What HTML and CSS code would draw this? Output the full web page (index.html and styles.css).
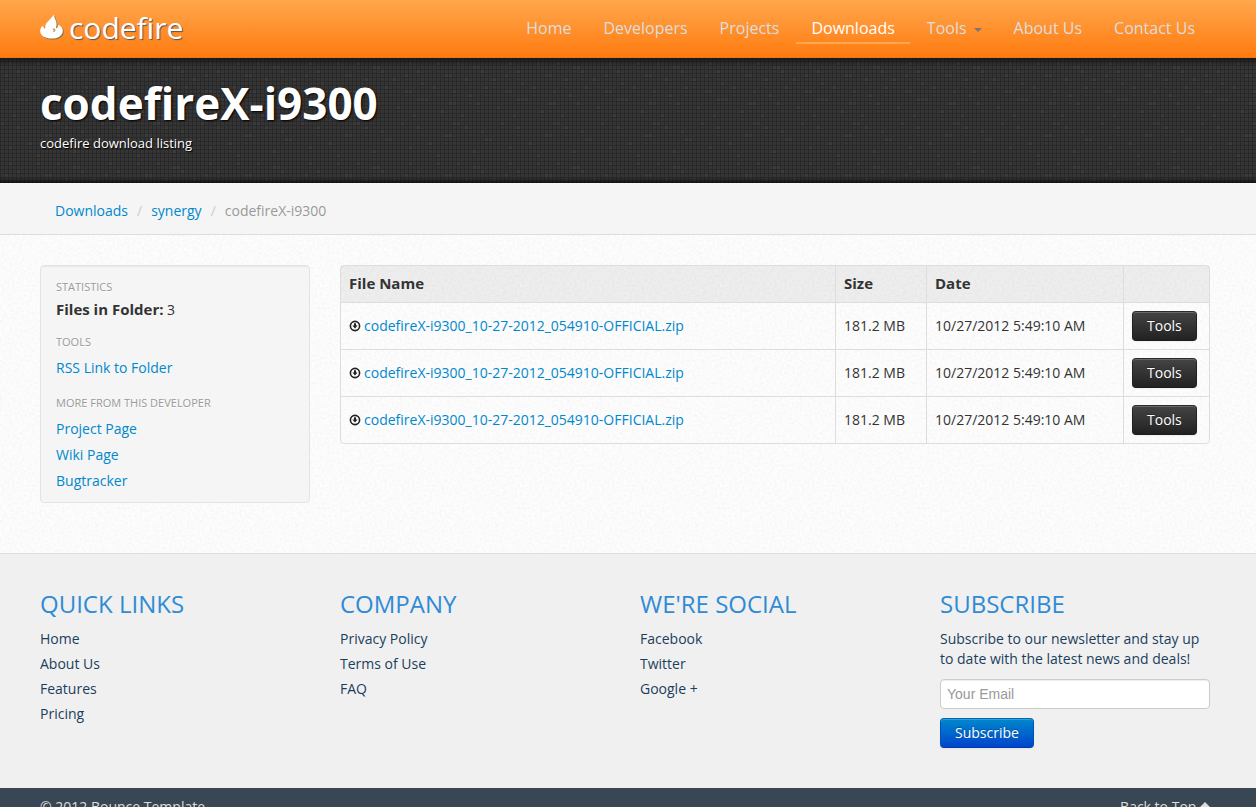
FILE: index.html
```html
<!DOCTYPE html>
<html lang="en">
<head>
<meta charset="utf-8">
<title>codefireX-i9300 - codefire downloads</title>
<link rel="stylesheet" href="styles.css">
</head>
<body id="top">
<svg class="defs" width="0" height="0" aria-hidden="true">
  <symbol id="i-download" viewBox="0 0 12 12">
    <circle cx="6" cy="6" r="4.600" fill="none" stroke="#222" stroke-width="1.600"/>
    <path d="M5 3.200h2V5.600h1.600L6 8.600 3.400 5.600H5z" fill="#222"/>
  </symbol>
</svg>
<header class="navbar">
  <div class="container navbar-inner">
    <a class="brand" href="#">
      <svg class="flame" viewBox="0 0 24 26" aria-hidden="true">
        <path d="M14.200 0.500C13.600 3.500 16.600 6 16.600 10C16.600 12 16.200 13 15.800 14.200C17.800 13.800 18.600 12.400 17.800 10.800C21.200 11.600 23 14.200 22.800 17.200C22.500 21.800 17.700 24.600 11.800 24.600C5.500 24.600 0.400 22 0.200 17.300C0.100 14.600 1.200 12.400 3.400 11.400C3.100 13 3.800 14.200 5.200 14.600C4.800 11 6.200 9.200 8.400 7C10.800 4.600 12 3 14.200 0.500Z" fill="#fff"/>
        <path d="M12.800 15.200c1.300-.5 2.200.4 1.900 1.400-.2.600-.8.800-1.400.6" fill="none" stroke="#c08a50" stroke-width="1.200"/>
      </svg>
      <span>codefire</span>
    </a>
    <nav class="nav">
      <a href="#">Home</a>
      <a href="#">Developers</a>
      <a href="#">Projects</a>
      <a class="active" href="#">Downloads</a>
      <a href="#">Tools<span class="caret"></span></a>
      <a href="#">About Us</a>
      <a href="#">Contact Us</a>
    </nav>
  </div>
</header>
<section class="hero">
  <div class="container">
    <h1>codefireX-i9300</h1>
    <p>codefire download listing</p>
  </div>
</section>
<div class="crumb-bar">
  <div class="container">
    <ol class="breadcrumb">
      <li><a href="#">Downloads</a></li>
      <li><a href="#">synergy</a></li>
      <li>codefireX-i9300</li>
    </ol>
  </div>
</div>
<main class="container content">
  <aside class="well">
    <h2>Statistics</h2>
    <p><strong>Files in Folder:</strong> 3</p>
    <h2>Tools</h2>
    <ul>
      <li><a href="#">RSS Link to Folder</a></li>
    </ul>
    <h2>More from this developer</h2>
    <ul>
      <li><a href="#">Project Page</a></li>
      <li><a href="#">Wiki Page</a></li>
      <li><a href="#">Bugtracker</a></li>
    </ul>
  </aside>
  <table class="files">
    <colgroup><col><col class="c-size"><col class="c-date"><col class="c-tools"></colgroup>
    <thead>
      <tr><th scope="col">File Name</th><th scope="col">Size</th><th scope="col">Date</th><td></td></tr>
    </thead>
    <tbody>
      <tr><td><svg class="dl" aria-hidden="true"><use href="#i-download"/></svg><a href="#">codefireX-i9300_10-27-2012_054910-OFFICIAL.zip</a></td><td>181.2 MB</td><td>10/27/2012 5:49:10 AM</td><td><button class="btn btn-dark" type="button">Tools</button></td></tr>
      <tr><td><svg class="dl" aria-hidden="true"><use href="#i-download"/></svg><a href="#">codefireX-i9300_10-27-2012_054910-OFFICIAL.zip</a></td><td>181.2 MB</td><td>10/27/2012 5:49:10 AM</td><td><button class="btn btn-dark" type="button">Tools</button></td></tr>
      <tr><td><svg class="dl" aria-hidden="true"><use href="#i-download"/></svg><a href="#">codefireX-i9300_10-27-2012_054910-OFFICIAL.zip</a></td><td>181.2 MB</td><td>10/27/2012 5:49:10 AM</td><td><button class="btn btn-dark" type="button">Tools</button></td></tr>
    </tbody>
  </table>
</main>
<footer>
  <div class="links">
    <div class="container columns">
      <section>
        <h3>Quick Links</h3>
        <ul><li><a href="#">Home</a></li><li><a href="#">About Us</a></li><li><a href="#">Features</a></li><li><a href="#">Pricing</a></li></ul>
      </section>
      <section>
        <h3>Company</h3>
        <ul><li><a href="#">Privacy Policy</a></li><li><a href="#">Terms of Use</a></li><li><a href="#">FAQ</a></li></ul>
      </section>
      <section>
        <h3>We're Social</h3>
        <ul><li><a href="#">Facebook</a></li><li><a href="#">Twitter</a></li><li><a href="#">Google +</a></li></ul>
      </section>
      <section>
        <h3>Subscribe</h3>
        <form>
          <label for="email">Subscribe to our newsletter and stay up to date with the latest news and deals!</label>
          <input id="email" type="email" placeholder="Your Email">
          <button class="btn btn-blue" type="button">Subscribe</button>
        </form>
      </section>
    </div>
  </div>
  <div class="legal">
    <div class="container legal-row">
      <span>© 2012 Bounce Template</span>
      <a href="#top">Back to Top <svg class="up" viewBox="0 0 10 11" aria-hidden="true"><path d="M5 1l5 5H7v5H3V6H0z" fill="#ddd"/></svg></a>
    </div>
  </div>
</footer>
</body>
</html>
```
FILE: styles.css
```css
* { box-sizing: border-box; }
body {
  margin: 0;
  color: #333;
  font: 14px/20px "Open Sans", "Noto Sans", sans-serif;
  background: #fdfdfd url("data:image/svg+xml,%3Csvg xmlns='http://www.w3.org/2000/svg' width='200' height='200'%3E%3Cfilter id='n'%3E%3CfeTurbulence type='fractalNoise' baseFrequency='.4' numOctaves='2' stitchTiles='stitch'/%3E%3CfeColorMatrix values='0 0 0 0 0 0 0 0 0 0 0 0 0 0 0 .06 0 0 0 -.022'/%3E%3C/filter%3E%3Crect width='200' height='200' filter='url(%23n)'/%3E%3C/svg%3E");
}
a { color: #08c; text-decoration: none; }
h1, h2, h3, p, ul, ol { margin: 0; padding: 0; }
ul, ol { list-style: none; }
.defs { display: block; }
.container { max-width: 1256px; padding: 0 46px 0 40px; }

/* Header */
.navbar {
  border-bottom: 1px solid #ef7413;
  background: linear-gradient(#ffa74c, #ff7b10);
}
.navbar-inner { display: flex; justify-content: space-between; align-items: flex-start; height: 57px; }
.brand {
  display: flex;
  align-items: flex-start;
  gap: 5px;
  padding-top: 10px;
  color: #fff;
  font-size: 30px;
  line-height: 36px;
  text-shadow: 1px 1px 1px #555;
}
.flame { width: 24px; height: 26px; margin-top: 4px; filter: drop-shadow(1px 1px 0 #8a7046); }
.nav { display: flex; gap: 2px; padding-top: 14px; }
.nav a {
  padding: 5px 15px 4px;
  color: #ddd;
  font-size: 16px;
  line-height: 19px;
  border-bottom: 2px solid transparent;
}
.nav a.active { color: #fff; border-color: #ffa74c; }
.caret {
  display: inline-block;
  margin-left: 7px;
  border: 4px solid transparent;
  border-top-color: #777;
  border-bottom: 0;
  vertical-align: middle;
}

/* Title band */
.hero {
  padding: 20px 0 30px;
  color: #fff;
  background:
    linear-gradient(rgba(0, 0, 0, .5), transparent 8px, transparent calc(100% - 6px), rgba(0, 0, 0, .6)),
    #292929 url("data:image/svg+xml,%3Csvg xmlns='http://www.w3.org/2000/svg' width='100' height='100'%3E%3Cdefs%3E%3Cpattern id='g' width='4' height='4' patternUnits='userSpaceOnUse'%3E%3Cpath d='M1 0h3v3H1z' fill='%23353535'/%3E%3C/pattern%3E%3C/defs%3E%3Cpath d='M0 0h100v100H0z' fill='url(%23g)'/%3E%3Cg fill='%233b3b3b'%3E%3Cpath d='M9 4h3v3h-3zM37 4h3v3h-3zM57 4h3v3h-3zM73 8h3v3h-3zM77 8h3v3h-3zM17 12h3v3h-3zM81 12h3v3h-3zM5 16h3v3h-3zM45 16h3v3h-3zM49 16h3v3h-3zM65 20h3v3h-3zM93 20h3v3h-3zM21 24h3v3h-3zM33 28h3v3h-3zM85 28h3v3h-3zM5 32h3v3h-3zM9 32h3v3h-3zM53 32h3v3h-3zM69 36h3v3h-3zM17 40h3v3h-3zM21 40h3v3h-3zM25 40h3v3h-3zM49 44h3v3h-3zM53 44h3v3h-3zM77 44h3v3h-3zM97 48h3v3h-3zM41 52h3v3h-3zM13 56h3v3h-3zM61 56h3v3h-3zM1 64h3v3h-3zM53 64h3v3h-3zM57 64h3v3h-3zM17 68h3v3h-3zM65 68h3v3h-3zM81 72h3v3h-3zM45 76h3v3h-3zM49 76h3v3h-3zM85 80h3v3h-3zM89 80h3v3h-3zM29 84h3v3h-3zM9 88h3v3h-3zM73 92h3v3h-3zM37 96h3v3h-3z'/%3E%3C/g%3E%3C/svg%3E");
}
.hero h1 { font-size: 44px; line-height: 50px; text-shadow: 1px 1px 2px #000; }
.hero p { padding-top: 5px; font-size: 13px; text-shadow: 1px 1px 1px #000; }

/* Breadcrumb */
.crumb-bar { padding: 18px 0 13px; background: #f5f5f5; border-bottom: 1px solid #ddd; }
.breadcrumb { display: flex; padding-left: 15px; color: #999; }
.breadcrumb li + li::before { content: "/"; padding: 0 9px; color: #ccc; }

/* Content */
.content { display: grid; grid-template-columns: 270px 1fr; gap: 30px; align-items: start; padding-top: 30px; padding-bottom: 50px; }
.well {
  padding: 11px 15px 8px;
  background: #f5f5f5;
  border: 1px solid #e3e3e3;
  border-radius: 4px;
  box-shadow: inset 0 1px 1px rgba(0, 0, 0, .05);
}
.well h2 { color: #999; font-size: 11px; font-weight: 400; line-height: 20px; text-transform: uppercase; text-shadow: 0 1px 0 #fff; }
.well p { padding: 1px 0 11px; line-height: 22px; }
.well li { line-height: 26px; }
.well ul { padding: 3px 0 0; }
.well ul + h2 { margin-top: 12px; }
.well strong { font-size: 15px; font-weight: 700; }
.files {
  width: 100%;
  border: 1px solid #ddd;
  border-radius: 4px;
  border-collapse: separate;
  border-spacing: 0;
  table-layout: fixed;
}
.files th, .files td { padding: 8px; text-align: left; }
.files thead th, .files thead td { height: 36px; padding: 7px 8px 9px; background: rgba(0, 0, 0, .06); font-size: 15px; font-weight: 700; }
.files tbody td { height: 47px; border-top: 1px solid #ddd; }
.files tr > * + * { border-left: 1px solid #ddd; }
.c-size { width: 91px; }
.c-date { width: 197px; }
.c-tools { width: 86px; }
.dl { width: 12px; height: 12px; margin-right: 3px; vertical-align: -1px; }

.btn {
  display: block;
  height: 30px;
  padding: 0 14px;
  color: #fff;
  font: 14px/20px "Open Sans", "Noto Sans", sans-serif;
  text-shadow: 0 -1px 0 rgba(0, 0, 0, .25);
  border: 1px solid;
  border-radius: 4px;
  box-shadow: inset 0 1px 0 rgba(255, 255, 255, .2), 0 1px 2px rgba(0, 0, 0, .05);
}
.btn-dark { background: linear-gradient(#444, #222); border-color: #2b2b2b #222 #1c1c1c; }
.btn-blue { background: linear-gradient(#08c, #04c); border-color: #0067b0 #0053b8 #003ca8; }

/* Footer */
.links { padding: 30px 0 40px; background: #f0f0f0; border-top: 1px solid #ddd; }
.columns { display: grid; grid-template-columns: repeat(4, 1fr); gap: 30px; }
.links h3 { padding-bottom: 2px; color: #2f8bd5; font-size: 24px; font-weight: 400; line-height: 40px; text-transform: uppercase; }
.links li { line-height: 25px; }
.links li a, .links label { color: #1b3e5c; }
.links label { display: block; padding: 3px 0 10px; }
.links input {
  display: block;
  width: 100%;
  height: 30px;
  margin-bottom: 9px;
  padding: 4px 6px;
  font: 14px/20px "Liberation Sans", Arial, sans-serif;
  background: #fff;
  border: 1px solid #ccc;
  border-radius: 4px;
  box-shadow: inset 0 1px 1px rgba(0, 0, 0, .075);
}
.links input::placeholder { color: #999; }
.legal { padding: 9px 0 20px; background: #394653; color: #ddd; }
.legal-row { display: flex; justify-content: space-between; }
.legal a { color: #ddd; }
.up { width: 10px; height: 11px; }
```
